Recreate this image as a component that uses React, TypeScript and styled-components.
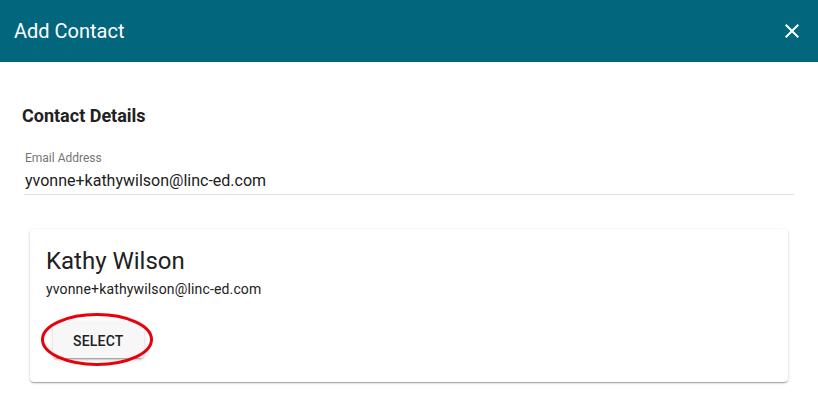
import React from 'react'
import styled, { createGlobalStyle } from 'styled-components'

const GlobalStyle = createGlobalStyle`
  body {
    margin: 0;
    background: #ffffff;
    font-family: Roboto, "Liberation Sans", Arial, sans-serif;
    color: rgba(0, 0, 0, 0.87);
  }
`

const StyledDialog = styled.div`
  width: 818px;
  height: 408px;
  background: #ffffff;
  overflow: hidden;
`

const StyledHeader = styled.div`
  box-sizing: border-box;
  height: 62px;
  background-color: #02667d;
  display: flex;
  align-items: center;
  justify-content: space-between;
  padding: 0 14px;
`

const StyledTitle = styled.div`
  font-size: 20px;
  line-height: 28px;
  font-weight: 400;
  color: #ffffff;
`

const StyledClose = styled.button`
  width: 24px;
  height: 24px;
  padding: 0;
  border: 0;
  background: transparent;
  display: flex;
  align-items: center;
  justify-content: center;
  cursor: pointer;
`

const StyledBody = styled.div`
  padding: 42px 22px 0;
`

const StyledHeading = styled.div`
  font-size: 18px;
  line-height: 24px;
  font-weight: 700;
  color: #212121;
`

const StyledField = styled.div`
  margin: 22px 2px 0;
  border-bottom: 1px solid #e0e0e0;
  padding-bottom: 3px;
`

const StyledLabel = styled.div`
  font-size: 12px;
  line-height: 16px;
  color: #757575;
  padding-left: 1px;
`

const StyledValue = styled.div`
  margin-top: 5px;
  font-size: 16px;
  line-height: 20px;
  color: #212121;
  padding-left: 1px;
`

const StyledCard = styled.div`
  margin: 34px 8px 0;
  padding: 16px 16px 24px;
  border-radius: 4px;
  background: #ffffff;
  box-shadow: 0 1px 3px rgba(0, 0, 0, 0.2), 0 1px 1px rgba(0, 0, 0, 0.14),
    0 2px 1px -1px rgba(0, 0, 0, 0.12);
`

const StyledName = styled.div`
  font-size: 24px;
  line-height: 32px;
  font-weight: 400;
  color: #212121;
`

const StyledEmail = styled.div`
  margin-top: 2px;
  font-size: 14px;
  line-height: 20px;
  letter-spacing: 0.15px;
  color: #212121;
`

const StyledActions = styled.div`
  display: flex;
  margin-top: 23px;
  padding-left: 7px;
`

const StyledButtonWrap = styled.div`
  position: relative;
`

const StyledButton = styled.button`
  box-sizing: border-box;
  height: 36px;
  min-width: 90px;
  padding: 2px 20px 0;
  border: 0;
  border-radius: 4px;
  background: #f7f7f7;
  font-family: Roboto, "Liberation Sans", Arial, sans-serif;
  font-size: 14px;
  font-weight: 500;
  letter-spacing: 0.2px;
  text-transform: uppercase;
  color: #212121;
  box-shadow: 0 3px 1px -2px rgba(0, 0, 0, 0.2), 0 2px 2px 0 rgba(0, 0, 0, 0.14),
    0 1px 5px 0 rgba(0, 0, 0, 0.12);
  cursor: pointer;
`

const StyledHighlight = styled.svg`
  position: absolute;
  left: -12px;
  top: -9px;
  pointer-events: none;
`

const App: React.FC = () => {
  return (
    <StyledDialog>
      <GlobalStyle />
      <StyledHeader>
        <StyledTitle>Add Contact</StyledTitle>
        <StyledClose aria-label="Close">
          <svg width="24" height="24" viewBox="0 0 24 24">
            <path
              fill="#ffffff"
              d="M19 6.41L17.59 5 12 10.59 6.41 5 5 6.41 10.59 12 5 17.59 6.41 19 12 13.41 17.59 19 19 17.59 13.41 12z"
            />
          </svg>
        </StyledClose>
      </StyledHeader>
      <StyledBody>
        <StyledHeading>Contact Details</StyledHeading>
        <StyledField>
          <StyledLabel>Email Address</StyledLabel>
          <StyledValue>yvonne+kathywilson@linc-ed.com</StyledValue>
        </StyledField>
        <StyledCard>
          <StyledName>Kathy Wilson</StyledName>
          <StyledEmail>yvonne+kathywilson@linc-ed.com</StyledEmail>
          <StyledActions>
            <StyledButtonWrap>
              <StyledButton>Select</StyledButton>
              <StyledHighlight width="114" height="54" viewBox="0 0 114 54">
                <ellipse cx="56" cy="26.5" rx="54.5" ry="25" fill="none" stroke="#e8000b" strokeWidth="3" />
              </StyledHighlight>
            </StyledButtonWrap>
          </StyledActions>
        </StyledCard>
      </StyledBody>
    </StyledDialog>
  )
}

export default App
